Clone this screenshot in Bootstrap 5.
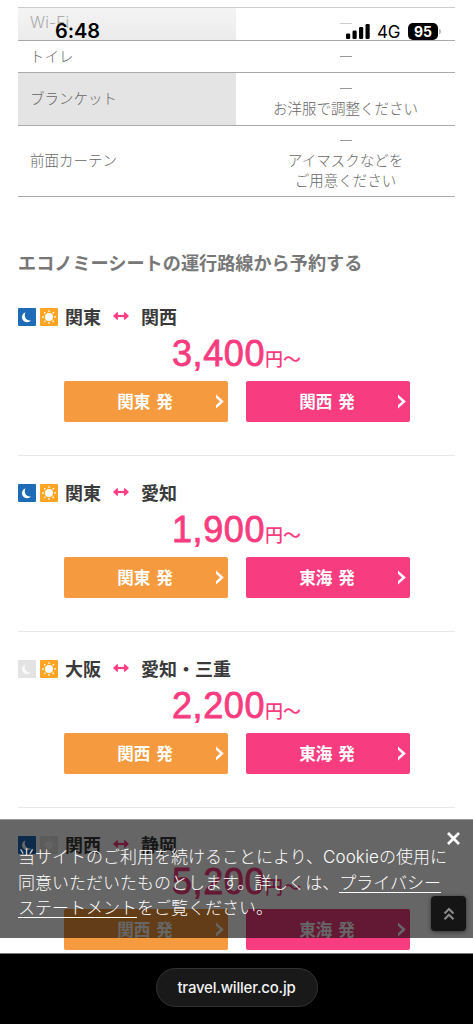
<!DOCTYPE html>
<html lang="ja">
<head>
<meta charset="utf-8">
<meta name="viewport" content="width=device-width, initial-scale=1">
<title>エコノミーシート</title>
<link href="https://cdn.jsdelivr.net/npm/bootstrap@5.3.0/dist/css/bootstrap.min.css" rel="stylesheet">
<style>
body{font-family:"Noto Sans CJK JP",sans-serif;background:#fff;color:#666;overflow:hidden}
.screen{width:473px;height:1024px}
.page-view{height:953px;padding:7px 18px 0}
.spec{border-top:1px solid #aaa;font-size:14.5px;line-height:19.5px;font-weight:300}
.spec:first-child{border-color:#ccc}
.spec-name{width:218px;padding:0 0 2px 12px}
.spec-shade{background:#e4e4e4}
.spec-fade{background:linear-gradient(#f4f4f4,#ebebeb);color:#aaa}
.spec-fade span{font-family:Inter,sans-serif;font-size:15.5px;letter-spacing:.2px}
.spec-list{border-bottom:1px solid #aaa}
.dash{width:12px;height:1px;background:#999;margin:9px auto 9px}
.heading{font-size:18.15px;font-weight:600;line-height:26px;margin:52px 0 1px;color:#777;white-space:nowrap}
.route{height:176px;border-bottom:1px solid #e8e8e8;padding-top:25px}
.route-first{height:180px;padding-top:29px}
.route-name{height:22px;font-size:18px;line-height:22px;font-weight:700;color:#3a3a3a;white-space:nowrap}
.route-name svg{position:relative;top:1px}
.fare{height:36px;margin-top:9px;line-height:36px;color:#f93c80;width:129px;margin-left:154px;white-space:nowrap}
.fare-num{font-family:"Liberation Sans",sans-serif;font-weight:400;font-size:36px;letter-spacing:.6px;-webkit-text-stroke:.8px #f93c80}
.fare-unit{font-size:18px;font-weight:500}
.depart{width:164px;height:41px;border-radius:2px;color:#fff;font-size:16.6px;font-weight:700;line-height:40px;padding:0 2px 0 0;border:0;white-space:pre;word-spacing:2px}
.depart:hover{color:#fff}
.depart svg{right:3px;top:13px}
.from{background:#f59a3e}.to{background:#f73c80}
.statusbar{left:0;top:0;width:473px;height:48px;color:#000;font-family:Inter,sans-serif}
.clock{left:55px;top:19px;font-size:20px;line-height:25px;font-weight:600;letter-spacing:-.1px}
.net{left:377px;top:22px;font-size:17px;line-height:20px;font-weight:400;letter-spacing:-.2px}
.cell-bars{left:346px;top:23px}
.power{left:408px;top:23px;width:30px;height:17px;border-radius:5px;background:#000;color:#fff;font-size:14px;line-height:17px;font-weight:700}
.power-tip{left:439px;top:29px;width:2px;height:5px;border-radius:0 2px 2px 0;background:#bbb}
.cookie{left:0;top:819px;width:473px;height:119px;background:rgba(0,0,0,.6);border-top:1px solid #999;color:#fff;font-size:17px;line-height:25.5px;font-weight:300;padding:23px 18px 0;white-space:nowrap}
.cookie a{color:#fff;text-decoration:none;border-bottom:1px solid #fff;display:inline-block;line-height:21px}
.latin{font-family:Inter,sans-serif;font-size:17px;letter-spacing:.1px;line-height:1}
.close-x{left:446px;top:11px}
.to-top{left:431px;top:896px;width:35px;height:35px;border-radius:4px;background:#151515;box-shadow:0 1px 4px #0008}
.browser{height:71px;background:#000;border-top:1px solid #777;padding-top:14px}
.address{width:162px;height:39px;border:1px solid #333;border-radius:20px;background:#191919;color:#f1f1f1;font:500 15px/37px Inter,sans-serif;letter-spacing:-.2px}
</style>
</head>
<body>
<svg width="0" height="0" class="position-absolute" aria-hidden="true">
<defs>
<symbol id="moon" viewBox="0 0 18 18"><path d="M7.400 4.200A5.200 5.200 0 1 0 13.300 12.200C9 13.500 5.300 9.300 7.400 4.200Z" fill="#fff"/></symbol>
<symbol id="sun" viewBox="0 0 18 18"><circle cx="9" cy="9" r="4" fill="#fff"/><path d="M9 2.200v1.700M9 14.100v1.700M2.200 9h1.700M14.100 9h1.700M4.200 4.200l1.200 1.200M12.600 12.600l1.200 1.200M13.800 4.200l-1.200 1.200M5.400 12.600l-1.200 1.200" stroke="#fff" stroke-width="1.300"/></symbol>
<symbol id="both" viewBox="0 0 16 10"><path d="M2 5h12" stroke="#f93c80" stroke-width="2.200"/><path d="M4.800 1.700 1.200 5 4.800 8.300M11.200 1.700 14.800 5 11.200 8.300" fill="#f93c80" stroke="#f93c80" stroke-width="1.600"/></symbol>
<symbol id="next" viewBox="0 0 10 15"><path d="M1 .5v3.300L5 7.500 1 11.200v3.300L8.800 7.500Z" fill="#fff"/></symbol>
</defs>
</svg>
<div class="screen position-relative overflow-hidden">
<main class="page-view overflow-hidden">
  <section class="spec-list">
    <div class="spec d-flex" style="height:33px"><div class="spec-name spec-fade d-flex align-items-center"><span>Wi-Fi</span></div><div class="flex-fill pt-1"><div class="dash opacity-50" style="margin-top:11px"></div></div></div>
    <div class="spec d-flex" style="height:32px"><div class="spec-name d-flex align-items-center">トイレ</div><div class="flex-fill pt-1"><div class="dash" style="margin-top:11px"></div></div></div>
    <div class="spec d-flex" style="height:53px"><div class="spec-name spec-shade d-flex align-items-center">ブランケット</div><div class="flex-fill text-center" style="padding-top:6px"><div class="dash"></div>お洋服で調整ください</div></div>
    <div class="spec d-flex" style="height:71px"><div class="spec-name d-flex align-items-center">前面カーテン</div><div class="flex-fill text-center" style="padding-top:5px"><div class="dash"></div>アイマスクなどを<br>ご用意ください</div></div>
  </section>
  <h2 class="heading">エコノミーシートの運行路線から予約する</h2>
  <div id="routes"></div>
</main>
<footer class="browser"><div class="address mx-auto text-center">travel.willer.co.jp</div></footer>

<aside class="cookie position-absolute">当サイトのご利用を続けることにより、<span class="latin">Cookie</span>の使用に<br>同意いただいたものとします。詳しくは、<a href="#">プライバシー</a><br><a href="#">ステートメント</a>をご覧ください。
  <svg class="close-x position-absolute" width="15" height="15"><path d="m2 2 11 11M13 2 2 13" stroke="#fff" stroke-width="2.700"/></svg>
</aside>
<a class="to-top position-absolute d-flex align-items-center justify-content-center" href="#" aria-label="ページの先頭へ"><svg width="12" height="15"><path d="m1.500 7.500 4.500-4.500 4.500 4.500M1.500 13.200l4.500-4.500 4.500 4.500" fill="none" stroke="#888" stroke-width="2.200"/></svg></a>

<div class="statusbar position-absolute">
  <div class="clock position-absolute">6:48</div>
  <svg class="cell-bars position-absolute" width="25" height="16"><rect y="10.500" width="4.200" height="5.500" rx="1.300"/><rect x="6.500" y="7.500" width="4.200" height="8.500" rx="1.300"/><rect x="13" y="4" width="4.200" height="12" rx="1.300"/><rect x="19.500" y="1" width="4.200" height="15" rx="1.300"/></svg>
  <div class="net position-absolute">4G</div>
  <div class="power position-absolute text-center">95</div><div class="power-tip position-absolute"></div>
</div>
</div>
<script>
const routes=[
 ["関東","関西","3,400","関東","関西",1,1],
 ["関東","愛知","1,900","関東","東海",1,1],
 ["大阪","愛知・三重","2,200","関西","東海",0,1],
 ["関西","静岡","5,200","関西","東海",1,0]
];
const tile=(id,on,color)=>`<svg width="18" height="18" style="background:${on?color:'#e3e3e3'};border-radius:1px;margin-right:4px"><use href="#${id}" opacity="${on?1:.75}"/></svg>`;
const depart=(city,kind)=>`<a href="#" class="btn depart ${kind} position-relative">${city} 発<svg class="position-absolute" width="10" height="15"><use href="#next"/></svg></a>`;
document.getElementById("routes").innerHTML=routes.map(([a,b,fare,l,r,night,day],i)=>`
<article class="route ${i?'':'route-first'}">
 <div class="route-name d-flex align-items-center">${tile("moon",night,"#1e6bb8")}${tile("sun",day,"#ffa526")}<span style="margin-left:3px">${a}</span><svg width="16" height="10" style="margin:0 12px 2px"><use href="#both"/></svg><span>${b}</span></div>
 <div class="fare"><span class="fare-num">${fare}</span><span class="fare-unit">円～</span></div>
 <div class="d-flex" style="gap:18px;margin:8.5px 0 0 46px">${depart(l,"from")}${depart(r,"to")}</div>
</article>`).join("");
</script>
<script src="https://cdn.jsdelivr.net/npm/bootstrap@5.3.0/dist/js/bootstrap.bundle.min.js"></script>
</body>
</html>
